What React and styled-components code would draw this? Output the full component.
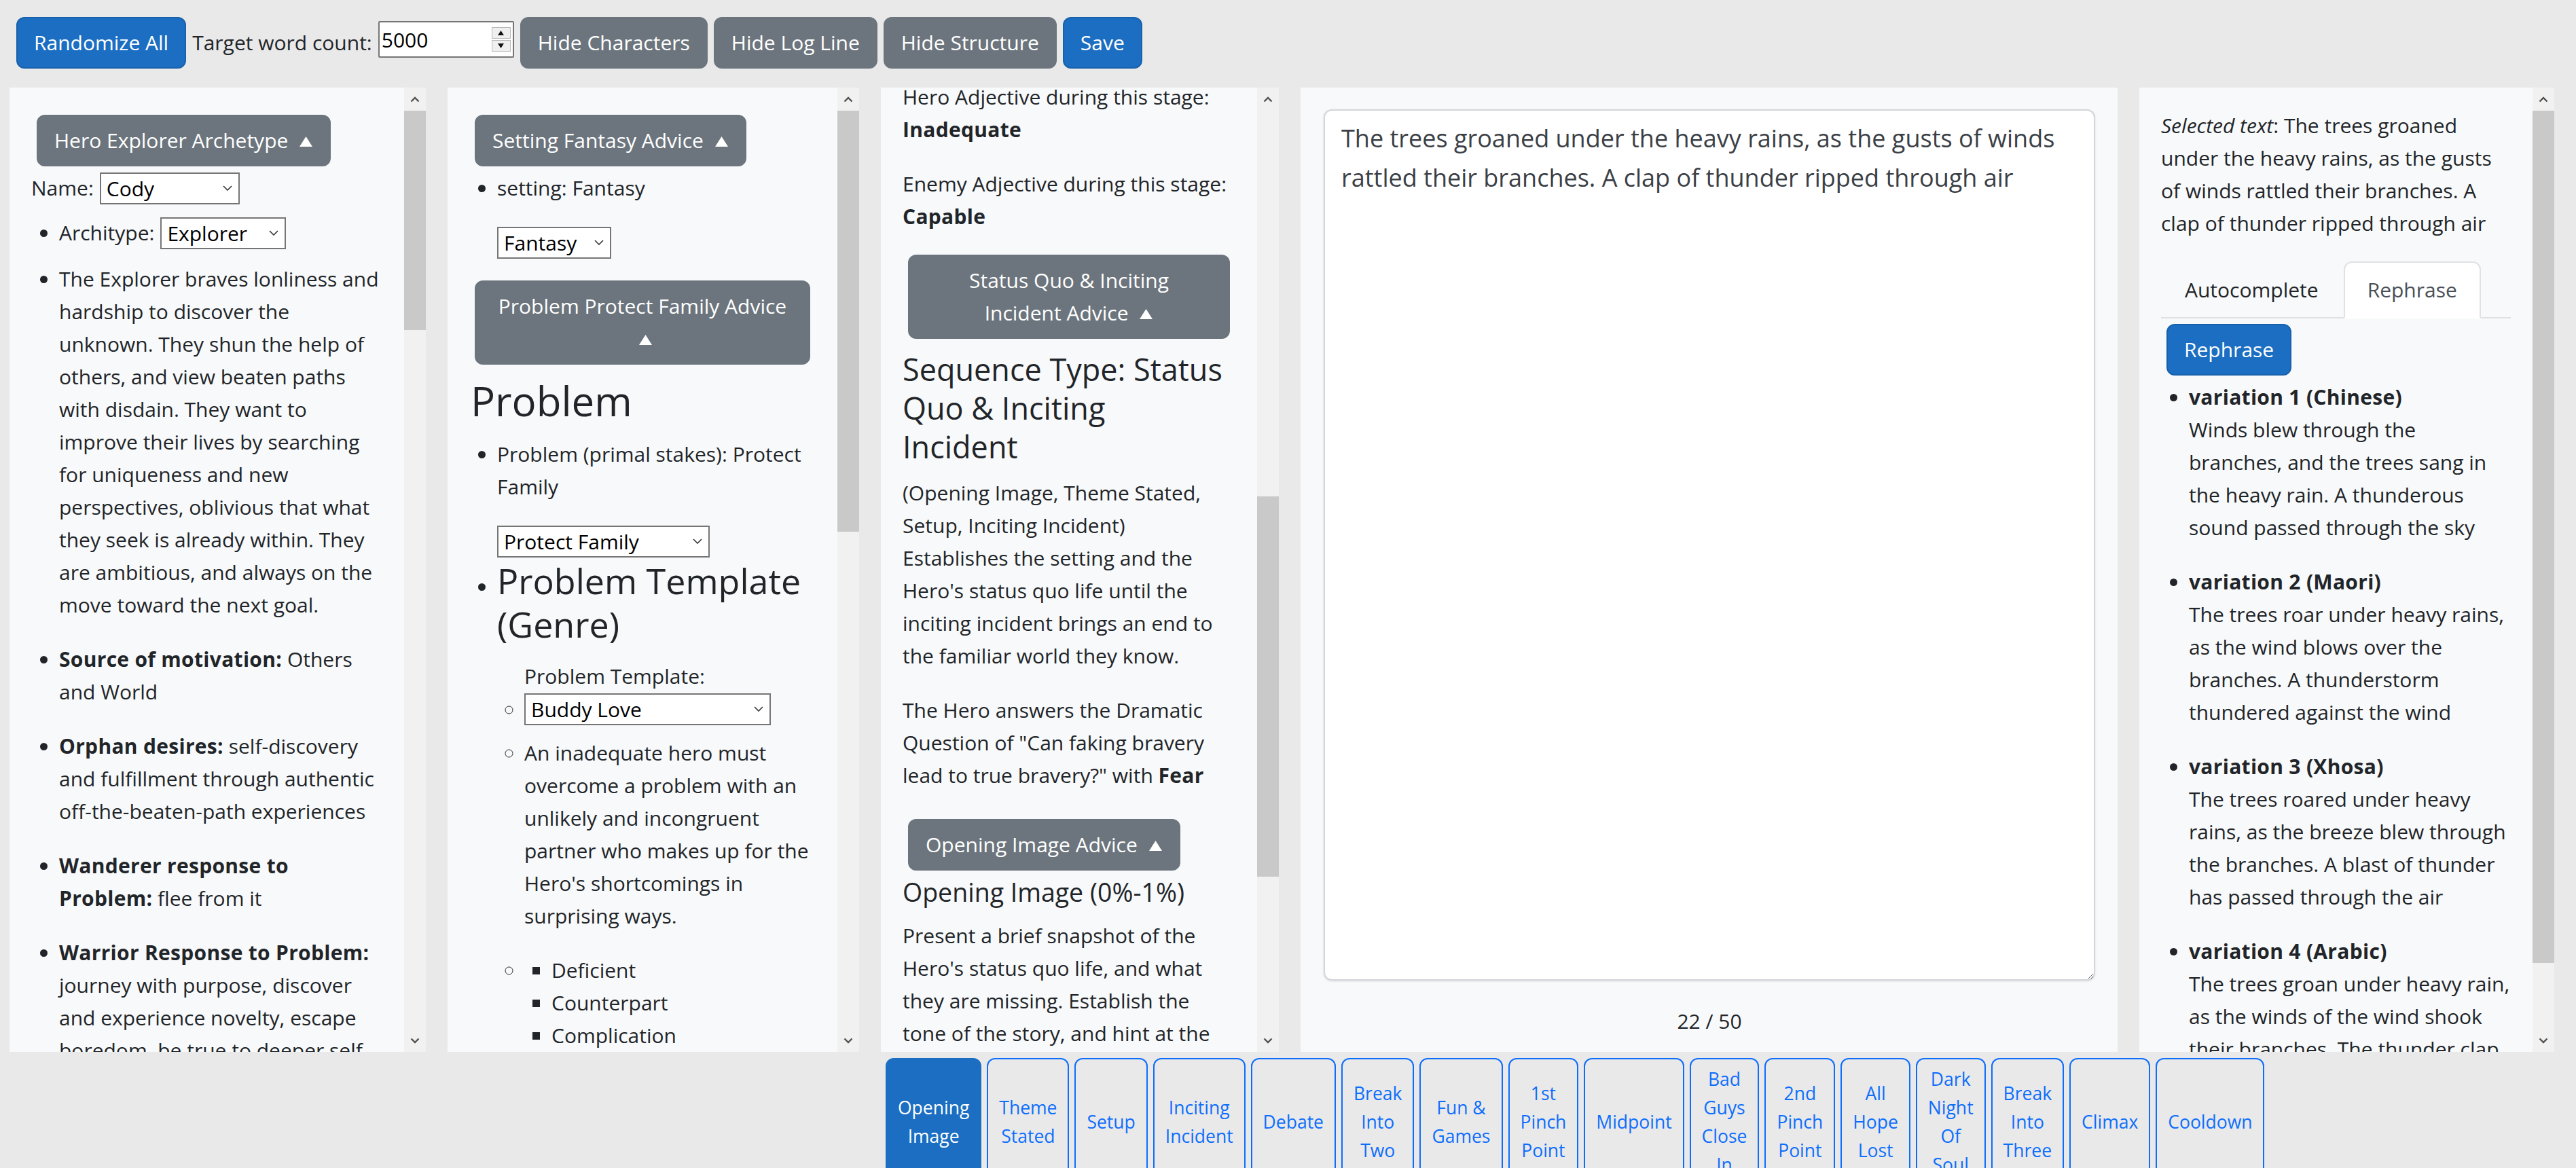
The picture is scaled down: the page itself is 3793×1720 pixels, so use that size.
import React from 'react';
import styled, { createGlobalStyle } from 'styled-components';

const GlobalStyle = createGlobalStyle`
  * { box-sizing: border-box; }
  body {
    margin: 0;
    background: #e9e9e9;
    color: #212529;
    font-family: "Open Sans", "Noto Sans", sans-serif;
    font-size: 30px;
    line-height: 48px;
  }
`;

const stages = [
  'Opening Image', 'Theme Stated', 'Setup', 'Inciting Incident', 'Debate',
  'Break Into Two', 'Fun & Games', '1st Pinch Point', 'Midpoint', 'Bad Guys Close In',
  '2nd Pinch Point', 'All Hope Lost', 'Dark Night Of Soul', 'Break Into Three', 'Climax', 'Cooldown'
];

const variations = [
  { title: 'variation 1 (Chinese)', text: 'Winds blew through the branches, and the trees sang in the heavy rain. A thunderous sound passed through the sky' },
  { title: 'variation 2 (Maori)', text: 'The trees roar under heavy rains, as the wind blows over the branches. A thunderstorm thundered against the wind' },
  { title: 'variation 3 (Xhosa)', text: 'The trees roared under heavy rains, as the breeze blew through the branches. A blast of thunder has passed through the air' },
  { title: 'variation 4 (Arabic)', text: 'The trees groan under heavy rain, as the winds of the wind shook their branches. The thunder clap tore through the air' },
];

const Caret = () => (
  <CaretIcon width="21" height="17" viewBox="0 0 21 17">
    <path d="M10.5 1 L20 16 L1 16 Z" fill="#fff" />
  </CaretIcon>
);

const Select = ({ w, value }) => (
  <SelectWrap $w={w}>
    <SelectBox defaultValue={value}>
      <option>{value}</option>
    </SelectBox>
    <SelectChevron width="14" height="8" viewBox="0 0 14 8">
      <path d="M1 1 L7 7 L13 1" stroke="#333" strokeWidth="1.6" fill="none" />
    </SelectChevron>
  </SelectWrap>
);

const ScrollRail = ({ top, size }) => (
  <Rail>
    <RailArrow>
      <svg width="14" height="9" viewBox="0 0 14 9">
        <path d="M1.5 7.5 L7 2 L12.5 7.5" stroke="#505050" strokeWidth="2.4" fill="none" />
      </svg>
    </RailArrow>
    <RailTrack>
      <RailThumb $top={top} $size={size} />
    </RailTrack>
    <RailArrow>
      <svg width="14" height="9" viewBox="0 0 14 9">
        <path d="M1.5 1.5 L7 7 L12.5 1.5" stroke="#505050" strokeWidth="2.4" fill="none" />
      </svg>
    </RailArrow>
  </Rail>
);

export default function App() {
  return (
    <>
      <GlobalStyle />
      <TopBar>
        <Btn $tone="primary">Randomize All</Btn>
        <BarLabel>Target word count:</BarLabel>
        <NumberBox>
          <NumberInput defaultValue="5000" />
          <Spinner>
            <SpinBtn>
              <svg width="9" height="7" viewBox="0 0 9 7"><path d="M4.5 0 L9 7 L0 7 Z" fill="#111" /></svg>
            </SpinBtn>
            <SpinBtn>
              <svg width="9" height="7" viewBox="0 0 9 7"><path d="M0 0 L9 0 L4.5 7 Z" fill="#111" /></svg>
            </SpinBtn>
          </Spinner>
        </NumberBox>
        <Btn $tone="secondary">Hide Characters</Btn>
        <Btn $tone="secondary">Hide Log Line</Btn>
        <Btn $tone="secondary">Hide Structure</Btn>
        <Btn $tone="primary">Save</Btn>
      </TopBar>

      <Workspace>
        <Panel>
          <PanelBody>
            <CollapseBtn $tone="secondary">Hero Explorer Archetype <Caret /></CollapseBtn>
            <SelectLine $mb={18}>Name: <Select w={206} value="Cody" /></SelectLine>
            <List>
              <li>
                <SelectLine $mb={20}>Architype: <Select w={185} value="Explorer" /></SelectLine>
              </li>
              <li>
                <P>The Explorer braves lonliness and hardship to discover the unknown. They shun the help of others, and view beaten paths with disdain. They want to improve their lives by searching for uniqueness and new perspectives, oblivious that what they seek is already within. They are ambitious, and always on the move toward the next goal.</P>
              </li>
              <li><P><Strong>Source of motivation:</Strong> Others and World</P></li>
              <li><P><Strong>Orphan desires:</Strong> self-discovery and fulfillment through authentic off-the-beaten-path experiences</P></li>
              <li><P><Strong>Wanderer response to Problem:</Strong> flee from it</P></li>
              <li><P><Strong>Warrior Response to Problem:</Strong> journey with purpose, discover and experience novelty, escape boredom, be true to deeper self</P></li>
              <li><P><Strong>Caregiver Response to Problem:</Strong> help others find their own path</P></li>
            </List>
          </PanelBody>
          <ScrollRail top={0} size={323} />
        </Panel>

        <Panel>
          <PanelBody>
            <CollapseBtn $tone="secondary">Setting Fantasy Advice <Caret /></CollapseBtn>
            <List>
              <li>
                <P>setting: Fantasy</P>
                <SelectLine $mb={4}><Select w={168} value="Fantasy" /></SelectLine>
              </li>
            </List>
            <CollapseBtn $tone="secondary">Problem Protect Family Advice <Caret /></CollapseBtn>
            <H2>Problem</H2>
            <List>
              <li>
                <P>Problem (primal stakes): Protect Family</P>
                <SelectLine $mb={2}><Select w={313} value="Protect Family" /></SelectLine>
              </li>
              <li>
                <H3>Problem Template (Genre)</H3>
                <SubLabel>Problem Template:</SubLabel>
                <List $marker="circle" $nested>
                  <li><SelectLine $mb={17}><Select w={363} value="Buddy Love" /></SelectLine></li>
                  <li><P>An inadequate hero must overcome a problem with an unlikely and incongruent partner who makes up for the Hero's shortcomings in surprising ways.</P></li>
                  <li>
                    <List $marker="square" $nested>
                      <li>Deficient</li>
                      <li>Counterpart</li>
                      <li>Complication</li>
                    </List>
                  </li>
                </List>
              </li>
            </List>
          </PanelBody>
          <ScrollRail top={0} size={620} />
        </Panel>

        <Panel>
          <PanelBody>
            <Scrolled $offset={-42}>
              <P>Hero Adjective during this stage: <Strong>Inadequate</Strong></P>
              <P>Enemy Adjective during this stage: <Strong>Capable</Strong></P>
              <CollapseBtn $tone="secondary" $full>Status Quo &amp; Inciting<br />Incident Advice <Caret /></CollapseBtn>
              <H4>Sequence Type: Status Quo &amp; Inciting<br />Incident</H4>
              <P>(Opening Image, Theme Stated, Setup, Inciting Incident)<br />Establishes the setting and the Hero's status quo life until the inciting incident brings an end to the familiar world they know.</P>
              <P>The Hero answers the Dramatic Question of "Can faking bravery lead to true bravery?" with <Strong>Fear</Strong></P>
              <CollapseBtn $tone="secondary" $mt={40}>Opening Image Advice <Caret /></CollapseBtn>
              <H5>Opening Image (0%-1%)</H5>
              <P>Present a brief snapshot of the Hero's status quo life, and what they are missing. Establish the tone of the story, and hint at the themes to come.</P>
            </Scrolled>
          </PanelBody>
          <ScrollRail top={568} size={560} />
        </Panel>

        <EditorPanel>
          <Editor defaultValue="The trees groaned under the heavy rains, as the gusts of winds rattled their branches. A clap of thunder ripped through air" />
          <Counter>22 / 50</Counter>
        </EditorPanel>

        <Panel>
          <PanelBody>
            <P><i>Selected text</i>: The trees groaned under the heavy rains, as the gusts of winds rattled their branches. A clap of thunder ripped through air</P>
            <TabNav>
              <TabLink>Autocomplete</TabLink>
              <TabLink $active>Rephrase</TabLink>
            </TabNav>
            <CollapseBtn $tone="primary">Rephrase</CollapseBtn>
            <List>
              {variations.map((v) => (
                <li key={v.title}>
                  <P><Strong>{v.title}</Strong><br />{v.text}</P>
                </li>
              ))}
            </List>
          </PanelBody>
          <ScrollRail top={0} size={1255} />
        </Panel>

        <StageNav>
          {stages.map((s, i) => (
            <StageTab key={s} $active={i === 0}>{s}</StageTab>
          ))}
        </StageNav>
      </Workspace>
    </>
  );
}

const TopBar = styled.div`
  display: flex;
  align-items: flex-start;
  gap: 9px;
  height: 129px;
  padding: 25px 24px 0;
`;

const Btn = styled.button`
  font-family: inherit;
  font-size: 30px;
  line-height: 48px;
  padding: 12px 24px;
  color: #fff;
  background: ${(p) => (p.$tone === 'primary' ? '#1b6ec2' : '#6c757d')};
  border: 2px solid ${(p) => (p.$tone === 'primary' ? '#1861ac' : '#6c757d')};
  border-radius: 12px;
  cursor: pointer;
  white-space: nowrap;
`;

const CollapseBtn = styled(Btn)`
  display: block;
  width: ${(p) => (p.$full ? 'calc(100% - 16px)' : 'fit-content')};
  max-width: calc(100% - 16px);
  margin: ${(p) => p.$mt || 8}px 8px 8px;
  white-space: normal;
  text-align: center;
`;

const CaretIcon = styled.svg`
  vertical-align: 1px;
  margin-left: 8px;
`;

const Strong = styled.b`
  font-weight: 700;
  letter-spacing: 0.3px;
`;

const BarLabel = styled.span`
  line-height: 76px;
  font-size: 30px;
`;

const NumberBox = styled.div`
  display: flex;
  align-items: center;
  width: 200px;
  height: 54px;
  margin-top: 6px;
  background: #fff;
  border: 2px solid #767676;
  border-radius: 2px;
`;

const NumberInput = styled.input`
  flex: 1;
  min-width: 0;
  border: 0;
  outline: 0;
  background: transparent;
  font-family: inherit;
  font-size: 30px;
  color: #000;
  padding: 0 3px;
`;

const Spinner = styled.div`
  display: flex;
  flex-direction: column;
  gap: 2px;
  width: 28px;
  height: 36px;
  margin-right: 3px;
`;

const SpinBtn = styled.div`
  flex: 1;
  display: flex;
  align-items: center;
  justify-content: center;
  background: #efefef;
  border: 1px solid #b9b9b9;
`;

const Workspace = styled.div`
  display: grid;
  grid-template-columns: 613px 606px 586px 1203px 611px;
  grid-template-rows: 1420px auto;
  column-gap: 32px;
  row-gap: 9px;
  padding: 0 14px;
`;

const Panel = styled.section`
  display: flex;
  min-width: 0;
  min-height: 0;
  background: #f8f9fa;
  overflow: hidden;
`;

const PanelBody = styled.div`
  flex: 1;
  min-width: 0;
  overflow: hidden;
  padding: 32px 32px 0;
`;

const Scrolled = styled.div`
  margin-top: ${(p) => p.$offset}px;
`;

const Rail = styled.div`
  flex: none;
  width: 32px;
  display: flex;
  flex-direction: column;
  background: #f1f1f1;
`;

const RailArrow = styled.div`
  height: 34px;
  display: flex;
  align-items: center;
  justify-content: center;
`;

const RailTrack = styled.div`
  flex: 1;
  display: flex;
  flex-direction: column;
`;

const RailThumb = styled.div`
  margin-top: ${(p) => p.$top}px;
  height: ${(p) => p.$size}px;
  background: #c9c9c9;
`;

const SelectLine = styled.div`
  display: flex;
  align-items: center;
  gap: 9px;
  height: 48px;
  margin-bottom: ${(p) => p.$mb || 0}px;
`;

const SelectWrap = styled.span`
  display: inline-grid;
  width: ${(p) => p.$w}px;
  & > * {
    grid-area: 1 / 1;
  }
`;

const SelectBox = styled.select`
  appearance: none;
  width: 100%;
  height: 47px;
  padding: 0 36px 0 8px;
  font-family: inherit;
  font-size: 30px;
  color: #000;
  background: #fff;
  border: 2px solid #767676;
  border-radius: 0;
`;

const SelectChevron = styled.svg`
  justify-self: end;
  align-self: center;
  margin-right: 11px;
  pointer-events: none;
`;

const List = styled.ul`
  margin: 0 0 ${(p) => (p.$nested ? 0 : 32)}px;
  padding-left: ${(p) => (p.$nested ? 40 : 41)}px;
  list-style: ${(p) => p.$marker || 'disc'};
`;

const P = styled.p`
  margin: 0 0 32px;
`;

const SubLabel = styled.div`
  padding-left: 40px;
`;

const H2 = styled.h2`
  font-size: 60px;
  line-height: 77px;
  font-weight: 400;
  margin: 15px 0 16px;
  padding-left: 2px;
`;

const H3 = styled.h3`
  font-size: 52px;
  line-height: 64px;
  font-weight: 400;
  margin: 0 0 21px;
`;

const H4 = styled.h4`
  font-size: 45px;
  line-height: 57px;
  font-weight: 400;
  margin: 0 0 16px;
  padding-top: 8px;
`;

const H5 = styled.h5`
  font-size: 37.5px;
  line-height: 48px;
  font-weight: 400;
  margin: 0 0 16px;
`;

const EditorPanel = styled.section`
  display: flex;
  flex-direction: column;
  background: #f8f9fa;
  padding: 32px 33px 0 34px;
`;

const Editor = styled.textarea`
  height: 1283px;
  padding: 12px 24px;
  font-family: inherit;
  font-size: 36px;
  line-height: 58px;
  color: #3b4046;
  background: #fff;
  border: 2px solid #d3d6da;
  border-radius: 12px;
  box-shadow: 0 1px 3px rgba(0, 0, 0, 0.12);
  outline: none;
`;

const Counter = styled.div`
  margin-top: 36px;
  text-align: center;
`;

const TabNav = styled.div`
  display: flex;
  gap: 2px;
  border-bottom: 2px solid #dee2e6;
`;

const TabLink = styled.div`
  padding: 16px 33px;
  margin-bottom: -2px;
  color: ${(p) => (p.$active ? '#495057' : '#212529')};
  background: ${(p) => (p.$active ? '#fff' : 'transparent')};
  border: 2px solid ${(p) => (p.$active ? '#dee2e6' : 'transparent')};
  border-bottom-color: ${(p) => (p.$active ? '#fff' : 'transparent')};
  border-radius: 12px 12px 0 0;
`;

const StageNav = styled.nav`
  grid-column: 3 / -1;
  display: flex;
  align-items: stretch;
  gap: 8px;
  padding-left: 7px;
`;

const StageTab = styled.button`
  width: min-content;
  padding: 8px 16px;
  font-family: inherit;
  font-size: 26.5px;
  line-height: 42px;
  text-align: center;
  color: ${(p) => (p.$active ? '#fff' : '#0d6efd')};
  background: ${(p) => (p.$active ? '#1b6ec2' : 'transparent')};
  border: 2px solid ${(p) => (p.$active ? '#1b6ec2' : '#0d6efd')};
  border-radius: 12px;
  cursor: pointer;
`;
